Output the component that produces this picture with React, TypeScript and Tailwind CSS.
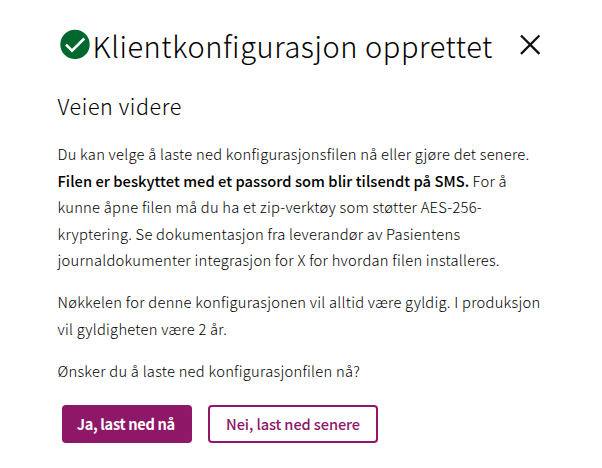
const lines = "block whitespace-nowrap";

export default function App() {
  return (
    <main className="h-[468px] w-[602px] overflow-hidden bg-white pl-[57.5px] pr-[61px] pt-[22px] font-['Noto_Sans_CJK_SC','Noto_Sans',sans-serif] font-light text-black">
      <header className="flex h-[46px] items-start">
        <svg className="mt-[5px] size-[36px] shrink-0" viewBox="0 0 36 36">
          <circle cx="17" cy="17.4" r="14.7" fill="#00682f" />
          <path d="M8 17.6l6 6 12.3-12.1" fill="none" stroke="#fff" strokeWidth="2.6" />
        </svg>
        <h1 className="-ml-px whitespace-nowrap text-[29px] leading-[46px] tracking-[0.57px]">Klientkonfigurasjon opprettet</h1>
        <button className="ml-auto mt-[11.5px] size-[22px] shrink-0" aria-label="Lukk">
          <svg viewBox="0 0 22 22" className="size-[22px]">
            <path d="M2 1.5l18.4 18.4M20.4 1.5L2 19.9" stroke="#111" strokeWidth="2.3" />
          </svg>
        </button>
      </header>
      <h2 className="mt-[21px] text-[21.5px] leading-[34px] tracking-[0.6px]">Veien videre</h2>
      <div className="mt-[18px] flex flex-col gap-[15.5px] text-[14.7px] leading-[26.5px] tracking-[0.27px]">
        <p>
          <span className={lines}>Du kan velge å laste ned konfigurasjonsfilen nå eller gjøre det senere.</span>
          <span className={lines}><strong className="font-medium tracking-[0.05px]">Filen er beskyttet med et passord som blir tilsendt på SMS.</strong> For å</span>
          <span className={lines}>kunne åpne filen må du ha et zip-verktøy som støtter AES-256-</span>
          <span className={lines}>kryptering. Se dokumentasjon fra leverandør av Pasientens</span>
          <span className={lines}>journaldokumenter integrasjon for X for hvordan filen installeres.</span>
        </p>
        <p>
          <span className={lines}>Nøkkelen for denne konfigurasjonen vil alltid være gyldig. I produksjon</span>
          <span className={lines}>vil gyldigheten være 2 år.</span>
        </p>
        <p className={lines}>Ønsker du å laste ned konfigurasjonfilen nå?</p>
      </div>
      <div className="ml-[4px] mt-[20.5px] flex gap-[16px] text-[14.6px]">
        <button className="h-[38px] w-[130.5px] whitespace-nowrap rounded-[4px] bg-[#8f1767] pr-[2px] font-bold tracking-[-0.33px] text-white">Ja, last ned nå</button>
        <button className="h-[38px] w-[170px] whitespace-nowrap rounded-[4px] border-2 border-[#8f1767] font-medium tracking-[-0.1px] text-[#8f1767]">Nei, last ned senere</button>
      </div>
    </main>
  );
}
